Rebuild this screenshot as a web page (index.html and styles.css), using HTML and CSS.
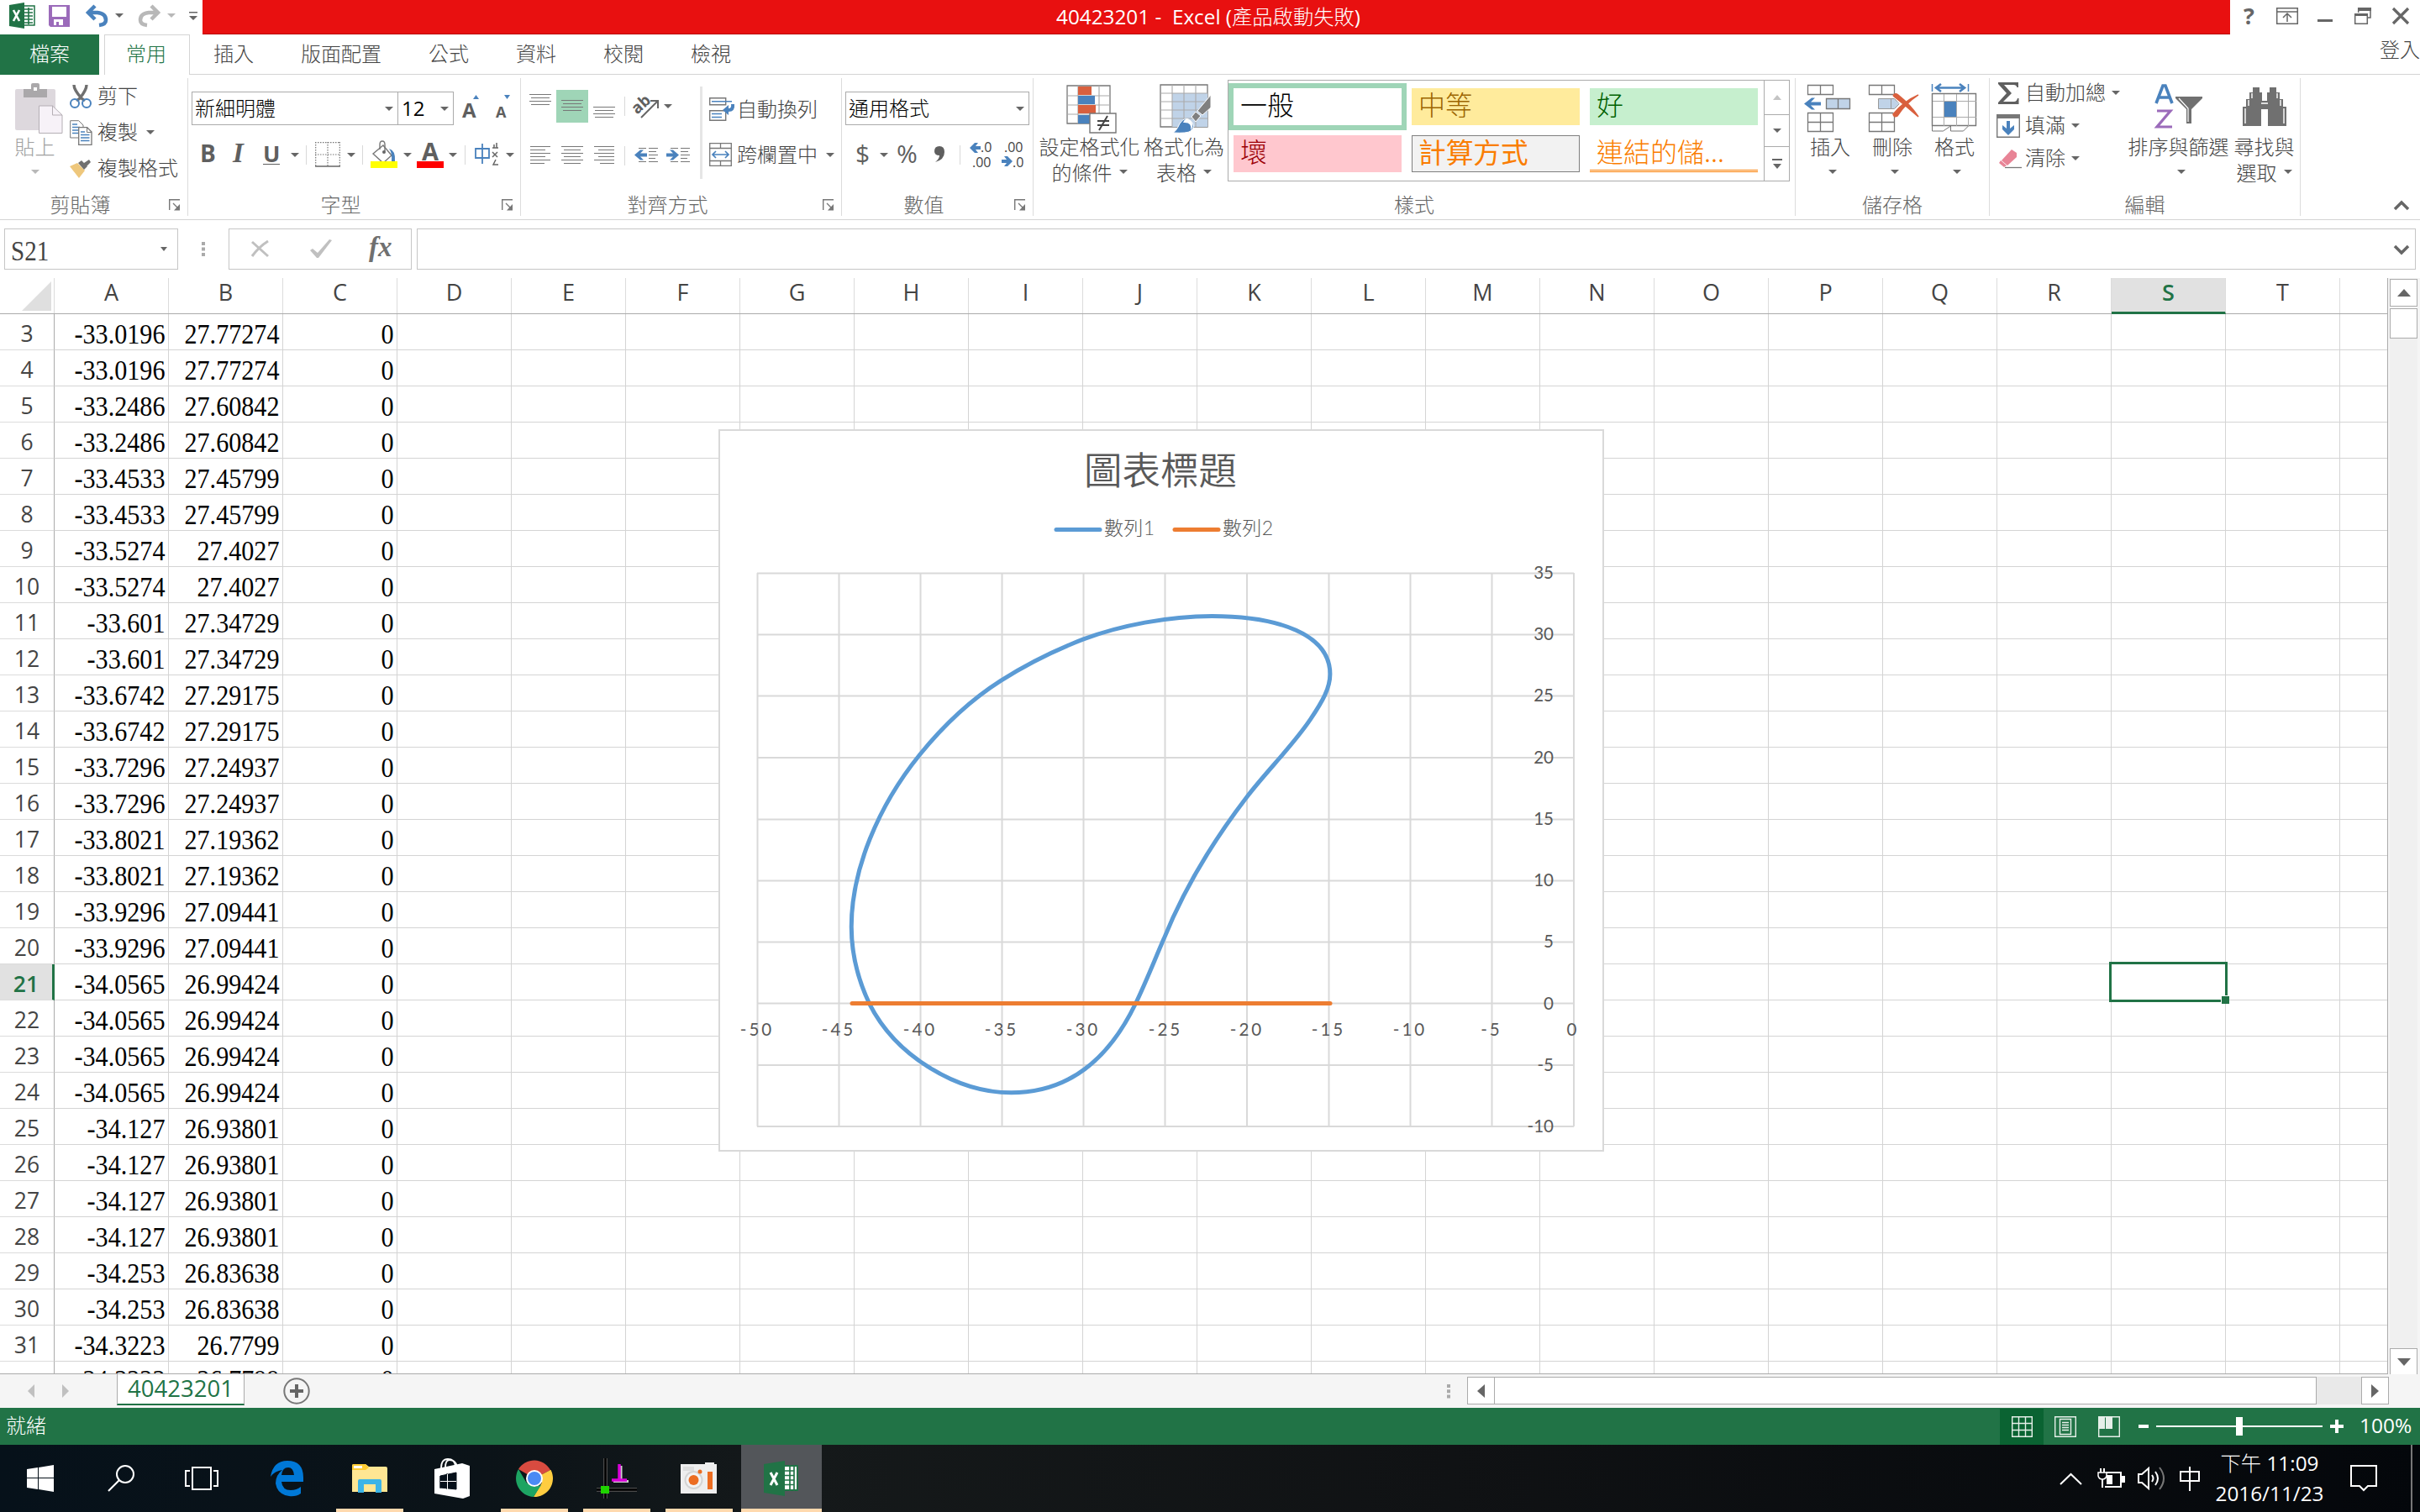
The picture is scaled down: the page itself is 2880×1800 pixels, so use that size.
FILE: index.html
```html
<!DOCTYPE html>
<html lang="zh-Hant">
<head>
<meta charset="utf-8">
<title>40423201 - Excel</title>
<link rel="stylesheet" href="styles.css">
</head>
<body>
<div class="titlebar">
  <div class="quick">
    <svg width="31" height="31" viewBox="0 0 31 31"><path d="M17 4h13v23H17z" fill="#fff" stroke="#217346" stroke-width="1.5"/><path d="M18 8h10M18 12h10M18 16h10M18 20h10M18 24h10M23 6v20" stroke="#217346" stroke-width="1.6" fill="none"/><path d="M0 3 18 0v31L0 28z" fill="#217346"/><path d="m5 9 7 13M12 9 5 22" stroke="#fff" stroke-width="2.6"/></svg>
    <svg width="25" height="26" viewBox="0 0 25 26"><path d="M0 0h25v26H2l-2-2z" fill="#9b6bba"/><path d="M4 2h17v12H4zM6 17h11v7h-5v-4H9v4H6z" fill="#fff"/></svg>
    <svg width="27" height="26" viewBox="0 0 27 26"><path d="M11 1 3 9l8 8M3 9h11q10 1 10 9 0 5-8 6" fill="none" stroke="#4a82bd" stroke-width="4.500"/></svg>
    <i class="caret"></i>
    <svg width="27" height="26" viewBox="0 0 27 26"><path d="m16 1 8 8-8 8M24 9H13Q3 10 3 18q0 5 8 6" fill="none" stroke="#b8b8b8" stroke-width="4.500"/></svg>
    <i class="caret pale"></i>
    <svg width="10" height="10" viewBox="0 0 10 10"><path d="M0 0h10v1.600H0zM0 5h10l-5 5z" fill="#666"/></svg>
  </div>
  <div class="caption">40423201 -&nbsp; Excel (<span>產品啟動失敗</span>)</div>
  <div class="winbtns">
    <b>?</b>
    <svg width="26" height="20" viewBox="0 0 26 20"><path d="M.7.7h24.6v18.6H.7zM0 5h26M13 17V8M8 12l5-5 5 5" fill="none" stroke="#666" stroke-width="1.5"/></svg>
    <svg width="18" height="20" viewBox="0 0 18 20"><path d="M0 14h18v3H0z" fill="#666"/></svg>
    <svg width="20" height="20" viewBox="0 0 20 20"><path d="M4.700 6V1H19v11h-4" fill="none" stroke="#666" stroke-width="1.500"/><path d="M4 0h16v4H4zM0 7h16v3H0z" fill="#666"/><path d="M.7 8h14.600v11.300H.7z" fill="none" stroke="#666" stroke-width="1.500"/></svg>
    <svg width="20" height="20" viewBox="0 0 20 20"><path d="m1 1 18 18M19 1 1 19" stroke="#666" stroke-width="3.200"/></svg>
  </div>
</div>

<nav class="tabs">
  <span class="file">檔案</span><span class="home">常用</span><span>插入</span><span>版面配置</span><span>公式</span><span>資料</span><span>校閱</span><span>檢視</span>
  <span class="signin">登入</span>
</nav>

<div class="ribbon">
  <section class="group g-clip">
    <div class="body">
      <div class="big paste">
        <svg width="56" height="60" viewBox="0 0 56 60"><rect y="7" width="48" height="49" rx="2" fill="#ddd8dd"/><path d="M10 17V7h9V2q0-2 2-2h6q2 0 2 2v5h9v10z" fill="#aaa8aa"/><path d="M22 5h4v4h-4z" fill="#fff"/><path d="M28.500 27h16L56 38v21.500H28.500z" fill="#f7f2f8" stroke="#b5afb5"/><path d="M44.500 27v11H56" fill="none" stroke="#b5afb5"/></svg>
        <span>貼上</span><span><i class="caret pale"></i></span>
      </div>
      <div class="cmds">
        <div><svg width="26" height="28" viewBox="0 0 26 28"><path d="M5 0q0 6 9 16l4 3M20 0q0 6-8 16l-4 3" stroke="#6f6f6f" stroke-width="3.400" fill="none"/><circle cx="6" cy="22" r="5" fill="none" stroke="#4a82bd" stroke-width="2"/><circle cx="20" cy="22" r="5" fill="none" stroke="#4a82bd" stroke-width="2"/></svg><span>剪下</span></div>
        <div><svg width="27" height="30" viewBox="0 0 27 30"><path d="M.7.7h10L16 6v15H.7z" fill="#fff" stroke="#777"/><path d="M3 5h6M3 8.500h9M3 12h9M3 15.500h9" stroke="#4a82bd" stroke-width="1.300"/><path d="M10.700 8.700h10L26 14v15.300H10.700z" fill="#fff" stroke="#777" stroke-width="1.300"/><path d="M20.500 9v5.500H26" fill="none" stroke="#777"/><path d="M13 14h5M13 17.500h10.500M13 21h10.500M13 24.500h10.500" stroke="#4a82bd" stroke-width="1.300"/></svg><span>複製</span><i class="caret"></i></div>
        <div><svg width="26" height="22" viewBox="0 0 26 22"><path d="m0 8 9-4 9 9-7 9z" fill="#eec77c"/><path d="m10 4 4-3 7 7-4 4zM17 4l6-4 2 3-5 5z" fill="#707070"/></svg><span>複製格式</span></div>
      </div>
    </div>
    <div class="glabel"><span>剪貼簿</span><svg class="launch" width="14" height="14" viewBox="0 0 14 14"><path d="M.7 13V.7H13M5 5l7 7" fill="none" stroke="#777" stroke-width="1.400"/><path d="M13 6v7.500H6z" fill="#777"/></svg></div>
  </section>

  <section class="group g-font">
    <div class="body">
      <div class="f1">
        <div class="combo"><span>新細明體</span><i class="caret"></i></div>
        <div class="combo size"><span>12</span><i class="caret"></i></div>
        <svg width="22" height="28" viewBox="0 0 22 28"><text x="0" y="25" class="ic" font-size="24" textLength="16">A</text><path d="m13 3 3.500-5L20 3z" fill="#4a82bd"/></svg>
        <svg width="20" height="28" viewBox="0 0 20 28"><text x="0" y="25" class="ic" font-size="18" textLength="12">A</text><path d="M10-2h7l-3.500 5z" fill="#4a82bd"/></svg>
      </div>
      <div class="f2">
        <b class="bold">B</b><b class="ital">I</b><b class="under">U</b><i class="caret"></i><i class="sep"></i>
        <svg width="30" height="30" viewBox="0 0 30 30"><path d="M0 .7h30M.7 0v29M29.300 0v29M15 0v29M0 15h30" stroke="#777" stroke-width="1.200" stroke-dasharray="1.500 1.500"/><path d="M0 29h30" stroke="#666" stroke-width="1.500"/></svg>
        <i class="caret"></i><i class="sep"></i>
        <svg width="33" height="32" viewBox="0 0 33 32"><path d="m3 15 12-10 10 12-10 9z" fill="#fff" stroke="#777" stroke-width="1.400"/><path d="M11 10V4q0-4 3-4t3 4v8" fill="none" stroke="#777" stroke-width="1.400"/><circle cx="16" cy="13" r="2" fill="#666"/><path d="M22 9q8 2 7 15h-4q1-10-3-15" fill="#4a82bd"/><path d="M0 24h32v8H0z" fill="#ff0"/></svg>
        <i class="caret"></i>
        <svg width="33" height="32" viewBox="0 0 33 32"><text x="6" y="23" class="ic" font-size="29" textLength="20">A</text><path d="M0 24h32v8H0z" fill="red"/></svg>
        <i class="caret"></i><i class="sep"></i>
        <svg width="29" height="30" viewBox="0 0 29 30"><path d="M1 8h16v11H1zM9 2v24" fill="none" stroke="#4a82bd" stroke-width="1.800"/><path d="M21 7h7M23 3v4M26 1v6M21 12l6 6M27 12l-6 6M25 21l-3 6h6" fill="none" stroke="#666" stroke-width="1.500"/></svg>
        <i class="caret"></i>
      </div>
    </div>
    <div class="glabel"><span>字型</span><svg class="launch" width="14" height="14" viewBox="0 0 14 14"><path d="M.7 13V.7H13M5 5l7 7" fill="none" stroke="#777" stroke-width="1.400"/><path d="M13 6v7.500H6z" fill="#777"/></svg></div>
  </section>

  <section class="group g-align">
    <div class="body">
      <div class="al">
        <div class="a1">
          <svg width="38" height="39"><path d="M6 5.500h26M8 9.500h22M6 13.500h26M8 17.500h22" class="ln"/></svg>
          <svg width="38" height="39" class="on"><path d="M6 12.500h26M8 16.500h22M6 20.500h26M8 24.500h22" class="ln"/></svg>
          <svg width="38" height="39"><path d="M6 20.500h26M8 24.500h22M6 28.500h26M8 32.500h22" class="ln"/></svg>
          <i class="sep"></i>
          <svg width="30" height="28" viewBox="0 0 30 28"><text x="-2" y="18" class="ic" font-size="19" transform="rotate(-42 8 14)">ab</text><path d="M8 27 27 8M19 7h9v9" fill="none" stroke="#666" stroke-width="2"/></svg>
          <i class="caret"></i>
        </div>
        <div class="a2">
          <svg width="38" height="38"><path d="M7 8.500h24M7 12.500h18M7 16.500h24M7 20.500h18M7 24.500h24M7 28.500h17" class="ln"/></svg>
          <svg width="38" height="38"><path d="M6 8.500h26M9 12.500h20M6 16.500h26M9 20.500h20M6 24.500h26M9 28.500h20" class="ln"/></svg>
          <svg width="38" height="38"><path d="M7 8.500h24M12 12.500h19M7 16.500h24M12 20.500h19M7 24.500h24M14 28.500h17" class="ln"/></svg>
          <i class="sep"></i>
          <svg width="28" height="20" viewBox="0 0 28 20"><path d="M5 1.500h9M17 1.500h11M17 5.500h9M17 9.500h11M17 13.500h8M5 17.500h9M17 17.500h11" class="ln"/><path d="m0 9.500 7-6h4l-4 4h8v4H7l4 4H7z" fill="#4a82bd"/></svg>
          <svg width="28" height="20" viewBox="0 0 28 20"><path d="M5 1.500h9M17 1.500h11M17 5.500h9M17 9.500h11M17 13.500h8M5 17.500h9M17 17.500h11" class="ln"/><path d="m15 9.500-7-6H4l4 4H0v4h8l-4 4h4z" fill="#4a82bd"/></svg>
        </div>
      </div>
      <div class="wraps">
        <div><svg width="30" height="28" viewBox="0 0 30 28"><path d="M.7.700h19v8H.7zM.7 15.700h19v11.600H.7z" fill="#fff" stroke="#777" stroke-width="1.400"/><path d="M3 4.700h24M3 19.500h12M3 23.500h12" stroke="#4a82bd" stroke-width="1.500"/><path d="M26 8h4q1 9-7 9v4l-7-6 7-6v4q4 0 3-5" fill="#4a82bd"/></svg><span>自動換列</span></div>
        <div><svg width="27" height="28" viewBox="0 0 27 28"><path d="M.7.700h25.600v26.600H.7zM0 6.500h27M0 21.500h27M13.500 0v6M13.500 22v6" fill="none" stroke="#777" stroke-width="1.300"/><path d="M4 14h19M8 10l-4 4 4 4M19 10l4 4-4 4" fill="none" stroke="#4a82bd" stroke-width="1.700"/></svg><span>跨欄置中</span><i class="caret"></i></div>
      </div>
    </div>
    <div class="glabel"><span>對齊方式</span><svg class="launch" width="14" height="14" viewBox="0 0 14 14"><path d="M.7 13V.7H13M5 5l7 7" fill="none" stroke="#777" stroke-width="1.400"/><path d="M13 6v7.500H6z" fill="#777"/></svg></div>
  </section>

  <section class="group g-num">
    <div class="body">
      <div class="combo"><span>通用格式</span><i class="caret"></i></div>
      <div class="n2">
        <b>$</b><i class="caret"></i><b>%</b>
        <svg width="12" height="20" viewBox="0 0 12 20"><path d="M6 0q6 0 6 7 0 9-11 12 5-4 5-8-6 0-6-5 0-6 6-6" fill="#5f5f5f"/></svg>
        <i class="sep"></i>
        <svg width="28" height="30" viewBox="0 0 28 30"><text x="13" y="12" class="sm">.0</text><text x="3" y="30" class="sm">.00</text><path d="m0 7 6-6h4L7 5h6v4H7l3 4H6z" fill="#4a82bd"/></svg>
        <svg width="28" height="30" viewBox="0 0 28 30"><text x="3" y="12" class="sm">.00</text><text x="13" y="30" class="sm">.0</text><path d="m13 23-6-6H3l3 4H0v4h6l-3 4h4z" fill="#4a82bd"/></svg>
      </div>
    </div>
    <div class="glabel"><span>數值</span><svg class="launch" width="14" height="14" viewBox="0 0 14 14"><path d="M.7 13V.7H13M5 5l7 7" fill="none" stroke="#777" stroke-width="1.400"/><path d="M13 6v7.500H6z" fill="#777"/></svg></div>
  </section>

  <section class="group g-style">
    <div class="body">
      <div class="big cond">
        <svg width="60" height="60" viewBox="0 0 60 60"><path d="M1 3h51v45H1z" fill="#fff" stroke="#777" stroke-width="1.300"/><path d="M14 3v45M39 3v45M1 15h51M1 26h51M1 37h51" stroke="#aaa" stroke-width="1.200"/><path d="M14 4h16v10H14zM14 26h21v10H14z" fill="#d9603e"/><path d="M14 15h20v10H14zM14 38h14v10H14z" fill="#4a82bd"/><path d="M28 36h31v23H28z" fill="#fff" stroke="#777" stroke-width="1.400"/><path d="M37 45h14M37 50h14M49 39l-10 17" stroke="#444" stroke-width="2"/></svg>
        <span>設定格式化</span><span>的條件<i class="caret"></i></span>
      </div>
      <div class="big tbl">
        <svg width="62" height="60" viewBox="0 0 62 60"><path d="M1 2h56v50H1z" fill="#fff" stroke="#777" stroke-width="1.300"/><path d="M15 12h42v40H15z" fill="#c0d3e8"/><path d="M15 2v50M29 2v50M43 2v50M1 12h56M1 22h56M1 32h56M1 42h56" stroke="#aaa" stroke-width="1.100"/><path d="M61 14v15L51 38l-6-5zM43 34l6 5-6 7-5-6z" fill="#808080" stroke="#fff"/><path d="M16 59q4-2 8-11 7-10 13-3 7 6 0 12-4 3-21 2" fill="#4a82bd" stroke="#fff"/><path d="M28 47q3-7 8-3 6 5 1 12 2-10-9-9" fill="#fff"/></svg>
        <span>格式化為</span><span>表格<i class="caret"></i></span>
      </div>
      <div class="gallery">
        <div class="cells">
          <span class="st-normal">一般</span><span class="st-neutral">中等</span><span class="st-good">好</span>
          <span class="st-bad">壞</span><span class="st-calc">計算方式</span><span class="st-link">連結的儲...</span>
        </div>
        <div class="gscroll">
          <span><i class="up pale"></i></span><span><i class="caret"></i></span>
          <span><svg width="12" height="12" viewBox="0 0 12 12"><path d="M0 0h12v2H0zM1 6h10l-5 6z" fill="#666"/></svg></span>
        </div>
      </div>
    </div>
    <div class="glabel"><span>樣式</span></div>
  </section>

  <section class="group g-cells">
    <div class="body">
      <div class="big">
        <svg class="nudge" width="60" height="60" viewBox="0 0 60 60"><path d="M6.500 2.500h30v11h-30zM21.500 2v12M6.500 35.500h30v22h-30zM6.500 46.500h30M21.500 35v23" fill="#fff" stroke="#777" stroke-width="1.300"/><path d="M28.500 18.500h28v12h-28zM42.500 18v13" fill="#c0d3e8" stroke="#777" stroke-width="1.300"/><path d="m2 24.500 9-7h4l-5 5h12v4H10l5 5h-4z" fill="#4a82bd"/></svg>
        <span>插入</span><span><i class="caret off"></i></span>
      </div>
      <div class="big">
        <svg width="60" height="60" viewBox="0 0 60 60"><path d="M2.500 2.500h30v11h-30zM17.500 2v12M2.500 35.500h30v22h-30zM2.500 46.500h30M17.500 35v23" fill="#fff" stroke="#777" stroke-width="1.300"/><path d="M13.500 18.500h19l6 6-6 6h-19zM28.500 18v13" fill="#c0d3e8" stroke="#999"/><path d="M34 12q12 10 28 28-18-12-28-28M61 14Q46 24 34 38" fill="none" stroke="#fff" stroke-width="8"/><path d="M31 15q2-4 6-1 15 12 24 26Q46 27 31 15M61 14Q46 24 36 39q-4 2-5-2 12-15 30-23" fill="#d9603e" stroke="#d9603e" stroke-width="1.500"/></svg>
        <span>刪除</span><span><i class="caret off"></i></span>
      </div>
      <div class="big">
        <svg width="60" height="60" viewBox="0 0 60 60"><path d="M3.500 12.500h52v38h-52z" fill="#fff" stroke="#777" stroke-width="1.400"/><path d="M17.500 13v38M32.500 13v38M46.500 13v38M4 21.500h52M4 40.500h52" stroke="#aaa"/><path d="M18 22h14v18H18z" fill="#4a82bd"/><path d="M3.500 51v6h13l9-6v6h15l6-6" fill="none" stroke="#777"/><path d="M3.500 1v9M46.500 1v9" stroke="#4a82bd" stroke-width="1.500"/><path d="M9 5.500h32M14 1l-6 4.500 6 4.500M36 1l6 4.500-6 4.500" fill="none" stroke="#4a82bd" stroke-width="2.600"/></svg>
        <span>格式</span><span><i class="caret off"></i></span>
      </div>
    </div>
    <div class="glabel"><span>儲存格</span></div>
  </section>

  <section class="group g-edit">
    <div class="body">
      <div class="cmds">
        <div><svg width="28" height="26" viewBox="0 0 28 26"><path d="M2 0h24v6h-1.500q-1-3-4-3H9l9 10L8 23h13q3 0 4-4h1.500v7H2v-2l10-11L2 2z" fill="#5f5f5f"/></svg><span>自動加總</span><i class="caret"></i></div>
        <div><svg width="28" height="28" viewBox="0 0 28 28"><path d="M.7.700h26.600v26.600H.7z" fill="#fff" stroke="#777" stroke-width="1.400"/><path d="M0 0h28v5H0z" fill="#777"/><path d="M12 8h4v9l5-4v5l-7 7-7-7v-5l5 4z" fill="#4a82bd"/></svg><span>填滿</span><i class="caret"></i></div>
        <div><svg width="28" height="24" viewBox="0 0 28 24"><path d="m18 1 6 4v5L13 20l-7-6z" fill="#e88496"/><path d="m5 14 7 6-3 2-6-5z" fill="#e88496"/><path d="M10 22.500h20" stroke="#777" stroke-width="1.300"/></svg><span>清除</span><i class="caret"></i></div>
      </div>
      <div class="big sort">
        <svg width="58" height="60" viewBox="0 0 58 60"><path d="M2 24 10 3h3l8 21M5 17h13" fill="none" stroke="#4a82bd" stroke-width="3.600"/><path d="M3 33h16L3 52h18" fill="none" stroke="#9b6bba" stroke-width="3.200"/><path d="M25 16h32v2L44 31v17h-6V31L25 18z" fill="#707070"/><path d="m29 18 11 12v16" fill="none" stroke="#fff" stroke-width="1.200"/></svg>
        <span>排序與篩選</span><span><i class="caret off"></i></span>
      </div>
      <div class="big find">
        <svg width="54" height="60" viewBox="0 0 54 60"><path d="M1 51V28h4v-9h4V11h4V5h8v6h3v10h6V11h3V5h8v6h4v8h4v9h4v23H31V31h-8v20z" fill="#707070"/><path d="M4 48V30M8 27v-7M12 18v-6M50 48V30M46 27v-7M42 18v-6M23 24h8" stroke="#fff" stroke-width="1.400"/></svg>
        <span>尋找與</span><span>選取<i class="caret"></i></span>
      </div>
    </div>
    <div class="glabel"><span>編輯</span></div>
  </section>
  <svg class="collapse" width="18" height="12" viewBox="0 0 18 12"><path d="m1 10 8-8 8 8" fill="none" stroke="#666" stroke-width="3.500"/></svg>
</div>

<div class="formula">
  <div class="namebox"><span>S21</span><i class="caret small"></i></div>
  <svg class="grip" width="4" height="17"><path d="M0 0h4v4H0zM0 6.500h4v4H0zM0 13h4v4H0z" fill="#aaa"/></svg>
  <div class="fxbox">
    <svg width="23" height="20" viewBox="0 0 23 20"><path d="m2 2 19 17M21 1Q10 8 2 19" fill="none" stroke="#c0c0c0" stroke-width="3"/></svg>
    <svg width="26" height="22" viewBox="0 0 26 22"><path d="m0 13 3-2 6 5L23 0l3 1L10 22H8z" fill="#c0c0c0"/></svg>
    <em>fx</em>
  </div>
  <div class="input"><svg width="18" height="12" viewBox="0 0 18 12"><path d="m1 2 8 8 8-8" fill="none" stroke="#666" stroke-width="3.500"/></svg></div>
</div>

<div class="work">
  <div class="sheet">
    <div class="colhead">
      <span class="corner"><svg width="35" height="35"><path d="M35 0v35H0z" fill="#dfdfdf"/></svg></span>
      <span>A</span><span>B</span><span>C</span><span>D</span><span>E</span><span>F</span><span>G</span><span>H</span><span>I</span><span>J</span><span>K</span><span>L</span><span>M</span><span>N</span><span>O</span><span>P</span><span>Q</span><span>R</span><span class="sel">S</span><span>T</span>
    </div>
    <div class="grid">
      <div class="row"><b>3</b><span>-33.0196</span><span>27.77274</span><span>0</span></div>
      <div class="row"><b>4</b><span>-33.0196</span><span>27.77274</span><span>0</span></div>
      <div class="row"><b>5</b><span>-33.2486</span><span>27.60842</span><span>0</span></div>
      <div class="row"><b>6</b><span>-33.2486</span><span>27.60842</span><span>0</span></div>
      <div class="row"><b>7</b><span>-33.4533</span><span>27.45799</span><span>0</span></div>
      <div class="row"><b>8</b><span>-33.4533</span><span>27.45799</span><span>0</span></div>
      <div class="row"><b>9</b><span>-33.5274</span><span>27.4027</span><span>0</span></div>
      <div class="row"><b>10</b><span>-33.5274</span><span>27.4027</span><span>0</span></div>
      <div class="row"><b>11</b><span>-33.601</span><span>27.34729</span><span>0</span></div>
      <div class="row"><b>12</b><span>-33.601</span><span>27.34729</span><span>0</span></div>
      <div class="row"><b>13</b><span>-33.6742</span><span>27.29175</span><span>0</span></div>
      <div class="row"><b>14</b><span>-33.6742</span><span>27.29175</span><span>0</span></div>
      <div class="row"><b>15</b><span>-33.7296</span><span>27.24937</span><span>0</span></div>
      <div class="row"><b>16</b><span>-33.7296</span><span>27.24937</span><span>0</span></div>
      <div class="row"><b>17</b><span>-33.8021</span><span>27.19362</span><span>0</span></div>
      <div class="row"><b>18</b><span>-33.8021</span><span>27.19362</span><span>0</span></div>
      <div class="row"><b>19</b><span>-33.9296</span><span>27.09441</span><span>0</span></div>
      <div class="row"><b>20</b><span>-33.9296</span><span>27.09441</span><span>0</span></div>
      <div class="row current"><b>21</b><span>-34.0565</span><span>26.99424</span><span>0</span></div>
      <div class="row"><b>22</b><span>-34.0565</span><span>26.99424</span><span>0</span></div>
      <div class="row"><b>23</b><span>-34.0565</span><span>26.99424</span><span>0</span></div>
      <div class="row"><b>24</b><span>-34.0565</span><span>26.99424</span><span>0</span></div>
      <div class="row"><b>25</b><span>-34.127</span><span>26.93801</span><span>0</span></div>
      <div class="row"><b>26</b><span>-34.127</span><span>26.93801</span><span>0</span></div>
      <div class="row"><b>27</b><span>-34.127</span><span>26.93801</span><span>0</span></div>
      <div class="row"><b>28</b><span>-34.127</span><span>26.93801</span><span>0</span></div>
      <div class="row"><b>29</b><span>-34.253</span><span>26.83638</span><span>0</span></div>
      <div class="row"><b>30</b><span>-34.253</span><span>26.83638</span><span>0</span></div>
      <div class="row"><b>31</b><span>-34.3223</span><span>26.7799</span><span>0</span></div>
      <div class="row last"><b></b><span>-34.3223</span><span>26.7799</span><span>0</span></div>
      <div class="cursor"><i></i></div>
      <svg class="chart" width="1054" height="860" viewBox="855 511 1054 860">
        <rect x="856" y="512" width="1052" height="858" fill="#fff" stroke="#d9d9d9" stroke-width="2"/>
        <path d="M901 682.500h972M901 755.500h972M901 828.500h972M901 902h972M901 975.500h972M901 1048.500h972M901 1121.500h972M901 1194.500h972M901 1268h972M901 1341h972M901.500 682v659M998.500 682v659M1095.500 682v659M1192.500 682v659M1289.500 682v659M1386.500 682v659M1484 682v659M1581.500 682v659M1678.500 682v659M1775.500 682v659M1873 682v659" fill="none" stroke="#d9d9d9" stroke-width="2"/>
        <g transform="translate(850 500) scale(.6888 .5612)"><path vector-effect="non-scaling-stroke" d="M860 416C785 416 700 436 638 465C585 490 540 518 495 553C440 596 392 654 355 710C283 819 237 955 237 1075C237 1135 248 1186 268 1238C314 1350 420 1427 513 1427C610 1427 680 1360 728 1238C745 1195 760 1148 777 1100C815 985 865 888 920 800C955 744 1000 690 1030 635C1052 595 1064 568 1064 539C1064 455 975 416 860 416Z" fill="none" stroke="#5b9bd5" stroke-width="5"/></g>
        <path d="M1014 1194.500h569" stroke="#ed7d31" stroke-width="5" stroke-linecap="round"/>
        <text class="ctitle" x="1381" y="577">圖表標題</text>
        <path d="M1257 630.500h52" stroke="#5b9bd5" stroke-width="5" stroke-linecap="round"/><path d="M1398 630.500h52" stroke="#ed7d31" stroke-width="5" stroke-linecap="round"/>
        <text class="clegend" x="1314" y="637" textLength="60">數列1</text><text class="clegend" x="1455" y="637" textLength="60">數列2</text>
        <g class="yax"><text x="1849" y="689">35</text><text x="1849" y="762">30</text><text x="1849" y="835">25</text><text x="1849" y="909">20</text><text x="1849" y="982">15</text><text x="1849" y="1055">10</text><text x="1849" y="1128">5</text><text x="1849" y="1202">0</text><text x="1849" y="1275">-5</text><text x="1849" y="1348">-10</text></g>
        <g class="xax"><text x="901" y="1233">-50</text><text x="998" y="1233">-45</text><text x="1095" y="1233">-40</text><text x="1192" y="1233">-35</text><text x="1289" y="1233">-30</text><text x="1387" y="1233">-25</text><text x="1484" y="1233">-20</text><text x="1581" y="1233">-15</text><text x="1678" y="1233">-10</text><text x="1775" y="1233">-5</text><text x="1872" y="1233">0</text></g>
      </svg>
    </div>
  </div>
  <div class="vscroll"><span class="btn"><i class="up"></i></span><span class="thumb"></span><span class="track"></span><span class="btn"><i class="dn"></i></span></div>
</div>

<div class="sheetbar">
  <svg class="nav" width="49" height="16"><path d="M8 0v16L0 8zM41 0v16l8-8z" fill="#c0c0c0"/></svg>
  <span class="stab">40423201</span>
  <svg class="add" width="32" height="32" viewBox="0 0 32 32"><circle cx="16" cy="16" r="14.700" fill="none" stroke="#777" stroke-width="2"/><path d="M8 16h16M16 8v16" stroke="#666" stroke-width="4"/></svg>
  <svg class="grip" width="4" height="17"><path d="M0 0h4v4H0zM0 6.300h4v4H0zM0 12.600h4v4H0z" fill="#aaa"/></svg>
  <div class="hscroll"><span class="btn"><i class="lf"></i></span><span class="thumb"></span><span class="track"></span><span class="btn"><i class="rt"></i></span></div>
</div>

<div class="status">
  <span class="ready">就緒</span>
  <span class="view on"><svg width="25" height="25"><path d="M.7.700h23.600v23.600H.7zM8.500 0v25M16.500 0v25M0 8.500h25M0 16.500h25" class="wl"/></svg></span>
  <span class="view"><svg width="26" height="25"><path d="M.7.700h24.600v23.600H.7zM6.500 3.500h13v18h-13zM9 7.500h8M9 10.500h8M9 13.500h8M9 16.500h8" class="wl"/></svg></span>
  <span class="view"><svg width="26" height="25"><path d="M.7.700h24.600v23.600H.7z" class="wl"/><path d="M0 0h8v15H0zM9 0h8v15H9z" fill="#e6efe9"/></svg></span>
  <svg class="zoombar" width="246" height="24"><path d="M0 10h12v4H0zM21 11h198v2H21zM116 1h8v22h-8zM228 10h16v4h-16zM234 4h4v16h-4z" fill="#fff"/></svg>
  <span class="pct">100%</span>
</div>

<div class="taskbar">
  <span class="app tight"><svg width="32" height="32"><path d="M0 5 13 3v12H0zM14 3l18-3v15H14zM0 16h13v13L0 27zM14 16h18v16l-18-3z" fill="#fff"/></svg></span>
  <span class="app tight"><svg width="32" height="32"><circle cx="21" cy="11" r="10" fill="none" stroke="#fff" stroke-width="2"/><path d="M14 18 1 31" stroke="#fff" stroke-width="2.200"/></svg></span>
  <span class="app"><svg width="40" height="28"><path d="M9 1h22v26H9zM6 5H1v18h5M34 5h5v18h-5" fill="none" stroke="#fff" stroke-width="2"/></svg></span>
  <span class="app edge"><svg width="40" height="42" viewBox="0 0 40 42"><path d="M0 19Q3 0 20 0q19 0 19 20v5H13q1 10 11 10 7 0 12-4v8q-6 4-14 3Q8 40 6 27 6 17 14 11 5 12 0 19M13 17h15q-1-9-7-9-7 0-8 9" fill="#0078d7"/></svg></span>
  <span class="app run"><svg width="42" height="35" viewBox="0 0 42 35"><path d="M0 2q0-2 2-2h14l4 3h20q2 0 2 2v28H0z" fill="#ffe693"/><path d="M0 2q0-2 2-2h14l4 4-4 3H0z" fill="#fc3"/><path d="M2 2h10v3H2z" fill="#fff"/><path d="M7 34V20q0-2 2-2h24q2 0 2 2v14h-7V24H14v10z" fill="#3cb4e7"/></svg></span>
  <span class="app"><svg width="42" height="48" viewBox="0 0 42 48"><path d="M0 13 33 6l9 3v36l-8 3L0 42z" fill="#fff"/><path d="M7 21v15M7 21l19-4v20L7 35zM15 18v19M7 27h19" fill="#06101a" stroke="#06101a"/><path d="M15.500 19v18M7 27.500h19" stroke="#fff"/><path d="M8 12Q8 1 16 1t9 8M13 11q0-9 5-9 7 0 9 8" fill="none" stroke="#fff" stroke-width="1.800"/></svg></span>
  <span class="app run"><svg width="44" height="44" viewBox="0 0 44 44"><path d="M22 22 3 11A22 22 0 0 1 41 12z" fill="#d84b40"/><path d="M22 22 41 12H22M22 12h19.600A22 22 0 0 1 21 44l10-17z" fill="#ffcd40"/><path d="m12.500 27L3 11A22 22 0 0 0 21 44l9-14-8 2z" fill="#1da462"/><circle cx="22" cy="22" r="10" fill="#fff"/><circle cx="22" cy="22" r="8" fill="#4a8af4"/></svg></span>
  <span class="app run"><svg width="48" height="48" viewBox="0 0 48 48"><path d="M10.500 0v48M0 37.500h48" stroke="#4a4a4a" stroke-width="5"/><path d="M10.500 0v48M0 37.500h48" stroke="#000" stroke-width="2.500"/><path d="M5 33h10v9H5z" fill="#1fd400"/><path d="M29 9v17M20 27.500h18" stroke="#ccc" stroke-width="3"/><path d="M27 7v19M18 26h18" stroke="#d800d8" stroke-width="3.500"/></svg></span>
  <span class="app run"><svg width="44" height="38" viewBox="0 0 44 38"><path d="M0 2h29V0h11v2h3v35H0z" fill="#eee"/><path d="M3 5h13v5H3z" fill="#ddd"/><circle cx="15.500" cy="21" r="11" fill="#d4d4d4"/><circle cx="15.500" cy="21" r="9" fill="#f3f3f3"/><circle cx="15.500" cy="21" r="6" fill="#ec6d22"/><circle cx="23" cy="11" r="2.500" fill="#ec6d22"/><path d="M32 11h6v21h-6z" fill="#ec6d22"/></svg></span>
  <span class="app run active"><svg width="42" height="42" viewBox="0 0 42 42"><path d="M23 5h18v31H23z" fill="#217346"/><path d="M25 7h14v27H25z" fill="#fff"/><path d="M24 12h12M24 17.500h12M24 23h12M24 28.500h12M31 7v27M36 7v27" stroke="#217346" stroke-width="1.700"/><path d="m0 4 25-4v42L0 38z" fill="#217346"/><path d="m8 14 8 15M16 14 8 29" stroke="#fff" stroke-width="3"/></svg></span>
  <div class="tray">
    <svg width="27" height="15"><path d="m1 14 12.500-12L26 14" fill="none" stroke="#fff" stroke-width="2"/></svg>
    <svg width="33" height="24"><path d="M10 5h18v17H9" fill="none" stroke="#fff" stroke-width="2"/><path d="M29 9h4v8h-4zM11 8h7v11h-7z" fill="#fff"/><path d="M4 0v5M8 0v5M6 12v11" stroke="#fff" stroke-width="2"/><path d="M1 5h10v4q-1 4-5 4T1 9z" fill="#05080d" stroke="#fff" stroke-width="1.500"/></svg>
    <svg width="33" height="30"><path d="M1 10h4l8-7v24l-8-7H1z" fill="none" stroke="#fff" stroke-width="2"/><path d="M17 11q3 4 0 8M21 7q6 8 0 16" fill="none" stroke="#fff" stroke-width="2"/><path d="M26 2q10 13 0 26" fill="none" stroke="#777" stroke-width="2"/></svg>
    <svg width="24" height="30"><path d="M1 7h22v11H1zM12 1v29" fill="none" stroke="#fff" stroke-width="2"/></svg>
    <div class="clock"><span><em>下午</em> 11:09</span><span>2016/11/23</span></div>
    <svg class="note" width="32" height="32"><path d="M1 1h30v24H21l-5 5-5-5H1z" fill="none" stroke="#fff" stroke-width="2"/></svg>
  </div>
</div>
</body>
</html>
```
FILE: styles.css
```css
* { box-sizing: border-box; }
body {
  margin: 0; width: 2880px; height: 1800px; overflow: hidden; background: #fff;
  display: flex; flex-direction: column;
  font: 300 24px/30px "Noto Sans CJK TC", "Noto Sans", sans-serif; color: #444;
}
svg { display: block; flex: none; overflow: visible; }
i { display: block; flex: none; }

.caret { width: 0; height: 0; border: 5px solid transparent; border-top-color: #666; border-bottom: 0; }
.caret.pale { border-top-color: #b8b8b8; }
.caret.small { border-width: 5px 4px 0; }
.caret.off { margin-left: 6px; }
.up { border: 5px solid transparent; border-bottom: 6px solid #666; border-top: 0; }
.up.pale { border-bottom-color: #c4c4c4; }
.sep { width: 1px; height: 23px; background: #d9d9d9; }
.ic { font-family: "Open Sans", sans-serif; font-weight: 700; fill: #5f5f5f; }
.ln { stroke: #777; stroke-width: 1.2; fill: none; }
.wl { stroke: #e6efe9; stroke-width: 1.4; fill: none; }
.sm { font: 400 16px "Open Sans", sans-serif; fill: #444; }

.titlebar { display: grid; grid-template-columns: 241px 2413px 226px; height: 41px; }
.quick { display: grid; grid-template-columns: 47px 44px 35px 27px 35px 26px 10px; padding-left: 11px; align-items: center; height: 37px; }
.caption {
  background: #e81010; border-bottom: 1px solid #b80c0c; color: #fff;
  font: 400 24.3px/40px "Open Sans", "Noto Sans CJK TC", sans-serif;
  padding-left: 1016px; white-space: pre;
}
.caption span { font-weight: 300; }
.winbtns { display: grid; grid-template-columns: 39px 49px 44px 45px 20px; padding-left: 16px; align-items: center; height: 38px; }
.winbtns b { font: 700 27px/34px "Open Sans", sans-serif; color: #666; }

.tabs { display: flex; height: 48px; line-height: 43px; }
.tabs span { padding: 0 28px; border-bottom: 1px solid #d4d4d4; white-space: nowrap; }
.tabs .file { width: 118px; padding: 0 0 0 35px; background: #217346; color: #fff; border: 0; }
.tabs .home { width: 102px; margin-left: 6px; padding: 0 0 0 25px; line-height: 41px; color: #217346; border: 1px solid #d4d4d4; border-bottom: 0; }
.tabs .signin { flex: 1; text-align: right; padding: 0; line-height: 34px; }

.ribbon { display: flex; height: 173px; padding: 4px 0; border-bottom: 1px solid #d4d4d4; }
.group { border-right: 1px solid #dcdcdc; height: 164px; display: flex; flex-direction: column; }
.body { height: 139px; flex: none; }
.glabel { display: flex; align-items: center; color: #666; line-height: 24px; height: 24px; }
.glabel span { flex: 1; text-align: center; padding-bottom: 3px; }
.launch { margin: 0 8px 0 10px; }
.g-clip { width: 224px; }
.g-font { width: 396px; }
.g-align { width: 382px; }
.g-num { width: 228px; }
.g-style { width: 907px; }
.g-cells { width: 231px; }
.g-edit { width: 370px; }

.big { display: flex; flex-direction: column; align-items: center; padding-top: 6px; line-height: 31px; white-space: nowrap; }
.big span { height: 31px; display: flex; align-items: center; gap: 8px; }
.big svg { margin-bottom: -1px; }
.big .nudge { margin-left: -6px; }
.g-clip .body { display: grid; grid-template-columns: 83px 140px; }
.paste { color: #a0a0a0; }
.paste svg { margin-left: 8px; }
.cmds div { display: grid; grid-template-columns: 33px max-content 10px; align-items: center; height: 43px; }
.cmds span, .wraps span, .combo span { padding-bottom: 3px; }
.cmds .caret { margin-left: 10px; }

.combo { display: flex; align-items: center; justify-content: space-between; width: 246px; height: 40px; padding: 0 5px 0 3px; border: 1px solid #ababab; color: #000; }
.combo.size { width: 67px; margin-left: -1px; font: 400 24px/30px "Open Sans", sans-serif; padding-left: 4px; }
.combo.size span { padding: 0; }
.g-font .body { padding: 16px 0 0 4px; }
.f1 { display: grid; grid-template-columns: 246px 76px 40px 20px; align-items: center; height: 40px; }
.f2 { display: grid; grid-template-columns: 38px 37px 33px 18px 11px 38px 18px 10px 39px 16px 38px 19px 12px 37px 10px; align-items: center; height: 38px; margin-top: 16px; padding-left: 10px; }
.f2 b { font: 700 28px/32px "Open Sans", sans-serif; color: #5f5f5f; padding-bottom: 4px; }
.f2 .ital { font: italic 700 33px/32px "Liberation Serif", serif; padding-left: 1px; }
.f2 .under { font-size: 27px; line-height: 24px; width: 20px; margin-bottom: 1px; padding: 0; border-bottom: 1.5px solid #5f5f5f; text-align: center; }

.g-align .body { display: flex; }
.al { width: 213px; padding: 14px 0 0 4px; }
.a1 { display: grid; grid-template-columns: 38px 38px 43px 12px 35px 10px; align-items: center; height: 39px; }
.a2 { display: grid; grid-template-columns: 38px 38px 43px 12px 38px 28px; align-items: center; height: 38px; margin-top: 20px; }
.on { background: #9fd5b7; }
.wraps { border-left: 3px solid #e6e6e6; height: 110px; margin-top: 10px; padding-left: 8px; white-space: nowrap; }
.wraps div { display: grid; grid-template-columns: 33px max-content 10px; align-items: center; height: 54px; }
.wraps .caret { margin-left: 10px; }

.g-num .body { padding: 16px 0 0 4px; }
.g-num .combo { width: 219px; }
.n2 { display: grid; grid-template-columns: 29px 20px 45px 30px 12px 38px 28px; align-items: center; height: 38px; margin-top: 16px; padding-left: 12px; }
.n2 b { font: 500 30px/34px "Open Sans", sans-serif; color: #5f5f5f; padding-bottom: 2px; }

.g-style .body { display: flex; }
.cond { width: 133px; }
.cond svg { margin-left: 4px; }
.tbl { width: 92px; }
.tbl svg { margin-left: 3px; }
.gallery { display: flex; width: 669px; height: 121px; margin: 2px 0 0 6px; border: 1px solid #ababab; }
.cells { display: grid; grid-template-columns: repeat(3, 200px); grid-auto-rows: 44px; gap: 12px; padding: 9px 6px; width: 637px; }
.cells span { font-size: 32px; line-height: 37px; padding-left: 8px; white-space: nowrap; }
.cells .st-normal { color: #000; box-shadow: 0 0 0 6px #9fd5b7; }
.cells .st-neutral { background: #ffeb9c; color: #9c6500; }
.cells .st-good { background: #c6efce; color: #006100; }
.cells .st-bad { background: #ffc7ce; color: #9c0006; }
.cells .st-calc { background: #f2f2f2; border: 1px solid #7f7f7f; color: #fa7d00; font-weight: 400; font-size: 32.7px; line-height: 35px; padding-left: 7px; }
.cells .st-link { color: #fa7d00; border-bottom: 3px double #fa7d00; }
.gscroll { flex: 1; border-left: 1px solid #ababab; display: grid; grid-template-rows: 41px 38px 40px; }
.gscroll span { display: flex; align-items: center; justify-content: center; border-bottom: 1px solid #ababab; }
.gscroll span:last-child { border: 0; }

.g-cells .body { display: grid; grid-template-columns: repeat(3, 74px); padding-left: 4px; }
.g-edit .body { display: grid; grid-template-columns: 156px 121px 83px; padding-left: 8px; }
.g-edit .cmds { margin-top: -2px; }
.g-edit .cmds div { grid-template-columns: 34px max-content 10px; height: 39px; }
.g-edit .cmds .caret { margin-left: 7px; }
.collapse { margin: 146px 0 0 111px; }

.formula { display: flex; height: 69px; padding: 10px 0 0 5px; align-items: flex-start; }
.namebox, .fxbox, .input { height: 49px; border: 1px solid #c6c6c6; display: flex; align-items: center; }
.namebox { width: 207px; padding: 0 12px 0 7px; justify-content: space-between; }
.namebox span { font: 400 33px/40px "Liberation Serif", serif; transform: scaleX(.88); transform-origin: left; padding-top: 5px; }
.formula .grip { margin: 16px 28px 0; }
.fxbox { width: 218px; display: grid; grid-template-columns: 71px 70px 30px; padding: 0 0 2px 25px; }
.fxbox em { font: italic 700 33px/40px "Liberation Serif", serif; color: #707070; padding-bottom: 3px; }
.input { width: 2379px; margin-left: 6px; justify-content: flex-end; padding-right: 7px; }

.work { display: flex; height: 1305px; background: #f5f5f5; }
.sheet { width: 2842px; background: #fff; border-right: 1px solid #ababab; border-bottom: 1px solid #ababab; overflow: hidden; }
.colhead { display: grid; grid-template-columns: 65px repeat(20, 136px); height: 43px; border-bottom: 1px solid #ababab; font: 400 27px/34px "Open Sans", sans-serif; text-align: center; }
.colhead span { border-right: 1px solid #dcdcdc; height: 42px; }
.colhead .corner { padding: 4px 0 0 26px; }
.colhead .sel { height: 43px; background: #e1e1e1; color: #217346; font-weight: 600; border-bottom: 3px solid #217346; }
.grid {
  position: relative; height: 1261px; overflow: hidden;
  background: repeating-linear-gradient(to right, transparent 0 135px, #d4d4d4 135px 136px) 65px 0,
    repeating-linear-gradient(to bottom, transparent 0 42px, #d4d4d4 42px 43px);
}
.row { display: grid; grid-template-columns: 65px repeat(3, 136px); height: 43px; }
.row b { font: 400 26.5px/47px "Open Sans", sans-serif; text-align: center; background: #fff; border-right: 1px solid #ababab; border-bottom: 1px solid #dcdcdc; height: 43px; }
.row.current b { background: #e1e1e1; color: #217346; font-weight: 600; border-right: 3px solid #217346; }
.row span { font: 400 33.500px/47px "Liberation Serif", serif; color: #000; text-align: right; transform: scaleX(.9); transform-origin: right; padding-right: 5px; height: 43px; }
.row.last span { line-height: 44px; }
.cursor { position: absolute; left: 2510px; top: 771px; width: 141px; height: 48px; border: 3px solid #217346; }
.cursor i { position: absolute; right: -5px; bottom: -5px; width: 10px; height: 10px; background: #217346; border: 1px solid #fff; border-width: 1px 0 0 1px; }
.chart { position: absolute; left: 855px; top: 137px; }
.ctitle { font: 400 45.5px "Noto Sans CJK TC", sans-serif; font-weight: 350; fill: #595959; text-anchor: middle; }
.clegend { font: 300 23px Lato, "Noto Sans CJK TC", sans-serif; fill: #595959; }
.yax, .xax { font: 400 20.5px Lato, sans-serif; fill: #595959; }
.yax { text-anchor: end; }
.xax { text-anchor: middle; letter-spacing: 3px; }

.vscroll { width: 33px; margin: 1px 0 0 2px; height: 1306px; flex: none; display: flex; flex-direction: column; }
.btn, .thumb { background: #fff; border: 1px solid #ababab; flex: none; }
.btn { width: 33px; height: 33px; display: flex; align-items: center; justify-content: center; }
.vscroll .up { border-width: 0 8px 9px; }
.vscroll .thumb { height: 36px; margin-top: 2px; }
.vscroll .track { flex: 1; background: #f0f0f0; }
.dn { border: 8px solid transparent; border-top: 9px solid #666; border-bottom: 0; }
.lf { border: 8px solid transparent; border-right: 9px solid #666; border-left: 0; }
.rt { border: 8px solid transparent; border-left: 9px solid #666; border-right: 0; }

.sheetbar { display: flex; height: 40px; background: #f5f5f5; }
.nav { margin: 12px 57px 0 33px; }
.stab { width: 152px; height: 37px; background: #fff; border: 1px solid #ababab; border-top: 0; border-bottom: 2px solid #217346; color: #217346; text-align: center; font: 400 27.5px/33px "Open Sans", sans-serif; }
.add { margin: 4px 0 0 46px; }
.sheetbar .grip { margin: 12px 0 0 1353px; }
.hscroll { display: flex; margin: 3px 0 0 20px; width: 1097px; }
.hscroll .thumb { width: 979px; height: 33px; margin-left: -1px; }
.hscroll .track { flex: 1; background: #e9e9e9; height: 33px; }

.status { display: flex; align-items: center; height: 44px; background: #217346; color: #fff; }
.ready { width: 2380px; padding-left: 7px; line-height: 39px; height: 44px; }
.view { width: 52px; height: 43px; display: flex; align-items: center; justify-content: center; }
.view.on { background: #0a6332; }
.zoombar { margin-left: 9px; }
.pct { font: 400 24.5px/40px "Open Sans", sans-serif; margin: -2px 0 0 17px; }

.taskbar { display: flex; gap: 2px; height: 80px; background: linear-gradient(90deg, #06111a, #0b1318 20%, #15191a 33%, #101214 60%, #04070b); color: #fff; }
.app { width: 96px; height: 80px; flex: none; display: flex; align-items: center; justify-content: center; }
.tight { margin-right: -2px; }
.edge { margin-left: 4px; }
.app.run { background: linear-gradient(#ffd9ae, #ffd9ae) center bottom / 80px 4px no-repeat; }
.app.active { background: linear-gradient(#ffd9ae, #ffd9ae) center bottom / 96px 4px no-repeat, #53565a; }
.tray { flex: 1; display: grid; grid-template-columns: 45px 48px 50px 40px 134px 61px; justify-content: end; align-items: center; margin-right: 9px; padding-right: 40px; border-right: 2px solid #777; }
.clock { display: flex; flex-direction: column; text-align: center; font: 400 24.3px/36px "Open Sans", "Noto Sans CJK TC", sans-serif; }
.clock em { font-style: normal; font-weight: 300; }
.note { margin-left: 29px; }
```
